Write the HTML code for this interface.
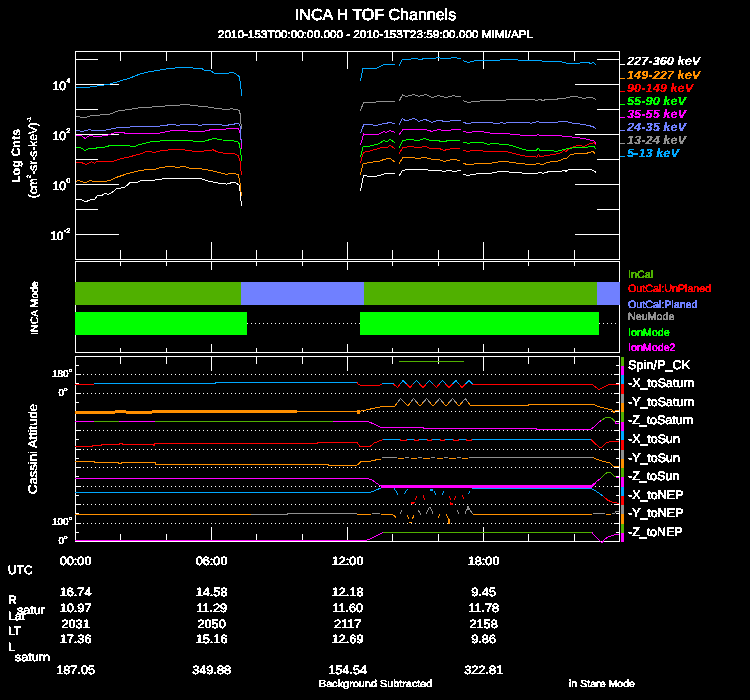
<!DOCTYPE html>
<html><head><meta charset="utf-8"><title>INCA H TOF Channels</title>
<style>
html,body{margin:0;padding:0;background:#000;}
body{width:750px;height:700px;overflow:hidden;}
svg{display:block;will-change:transform;font-family:"Liberation Sans",Arial,Helvetica,sans-serif;}
svg rect,svg polyline,svg line{shape-rendering:crispEdges;}
svg text{text-rendering:geometricPrecision;}
</style></head><body>
<svg width="750" height="700" viewBox="0 0 750 700">
<rect x="0" y="0" width="750" height="700" fill="#000"/>
<defs><filter id="crisp" x="0" y="0" width="750" height="700" filterUnits="userSpaceOnUse" color-interpolation-filters="sRGB"><feComponentTransfer><feFuncA type="discrete" tableValues="0 1 1"/></feComponentTransfer></filter></defs>
<g fill="#fff">
<rect x="75" y="51" width="545" height="1" fill="#fff"/>
<rect x="75" y="259" width="545" height="1" fill="#fff"/>
<rect x="75" y="51" width="1" height="209" fill="#fff"/>
<rect x="619" y="51" width="1" height="209" fill="#fff"/>
<rect x="120" y="51" width="1" height="10" fill="#fff"/>
<rect x="120" y="250" width="1" height="10" fill="#fff"/>
<rect x="166" y="51" width="1" height="10" fill="#fff"/>
<rect x="166" y="250" width="1" height="10" fill="#fff"/>
<rect x="211" y="51" width="1" height="18" fill="#fff"/>
<rect x="211" y="242" width="1" height="18" fill="#fff"/>
<rect x="256" y="51" width="1" height="10" fill="#fff"/>
<rect x="256" y="250" width="1" height="10" fill="#fff"/>
<rect x="302" y="51" width="1" height="10" fill="#fff"/>
<rect x="302" y="250" width="1" height="10" fill="#fff"/>
<rect x="347" y="51" width="1" height="18" fill="#fff"/>
<rect x="347" y="242" width="1" height="18" fill="#fff"/>
<rect x="392" y="51" width="1" height="10" fill="#fff"/>
<rect x="392" y="250" width="1" height="10" fill="#fff"/>
<rect x="438" y="51" width="1" height="10" fill="#fff"/>
<rect x="438" y="250" width="1" height="10" fill="#fff"/>
<rect x="483" y="51" width="1" height="18" fill="#fff"/>
<rect x="483" y="242" width="1" height="18" fill="#fff"/>
<rect x="528" y="51" width="1" height="10" fill="#fff"/>
<rect x="528" y="250" width="1" height="10" fill="#fff"/>
<rect x="574" y="51" width="1" height="10" fill="#fff"/>
<rect x="574" y="250" width="1" height="10" fill="#fff"/>
<rect x="75" y="84" width="44" height="1" fill="#fff"/>
<rect x="575" y="84" width="45" height="1" fill="#fff"/>
<rect x="75" y="134" width="44" height="1" fill="#fff"/>
<rect x="575" y="134" width="45" height="1" fill="#fff"/>
<rect x="75" y="184" width="44" height="1" fill="#fff"/>
<rect x="575" y="184" width="45" height="1" fill="#fff"/>
<rect x="75" y="234" width="44" height="1" fill="#fff"/>
<rect x="575" y="234" width="45" height="1" fill="#fff"/>
<rect x="75" y="59" width="23" height="1" fill="#fff"/>
<rect x="597" y="59" width="23" height="1" fill="#fff"/>
<rect x="75" y="109" width="23" height="1" fill="#fff"/>
<rect x="597" y="109" width="23" height="1" fill="#fff"/>
<rect x="75" y="159" width="23" height="1" fill="#fff"/>
<rect x="597" y="159" width="23" height="1" fill="#fff"/>
<rect x="75" y="209" width="23" height="1" fill="#fff"/>
<rect x="597" y="209" width="23" height="1" fill="#fff"/>
<g id="p1lines">
<polyline points="76.0,199.6 80.7,199.6 86.0,201.6 91.3,199.6 94.7,199.6 97.3,195.6 102.0,195.3 105.0,193.3 108.0,194.4 110.7,193.3 116.7,188.7 124.7,187.3 130.0,182.7 138.0,182.0 140.7,180.4 155.3,180.0 166.0,178.4 190.0,178.4 195.0,178.4 201.9,178.9 208.7,181.2 217.9,183.0 227.0,184.1 232.7,182.3 236.1,183.0 239.6,185.3 240.7,199.0 241.9,205.9" fill="none" stroke="#ffffff" stroke-width="1"/>
<polyline points="360.4,190.6 363.6,175.6 370.0,176.4 376.0,176.4 384.0,174.0 389.0,173.0 395.0,173.6" fill="none" stroke="#ffffff" stroke-width="1"/>
<polyline points="399.0,176.4 402.4,170.4 410.0,169.4 419.0,170.0 425.0,169.4 432.0,171.0 438.0,170.4 444.0,171.4 450.0,170.4 454.0,171.4 461.0,170.4" fill="none" stroke="#ffffff" stroke-width="1"/>
<polyline points="463.0,174.4 468.0,175.4 478.0,173.6 480.0,173.6 492.0,173.0 500.0,171.4 508.0,171.4 510.0,172.4 520.0,172.4 524.0,173.4 536.0,173.4 540.0,172.4 543.0,173.4 546.0,172.4 550.0,171.4 560.0,171.4 565.0,170.4 566.0,171.4 569.0,169.4 590.0,169.4 593.0,170.4 596.0,172.4" fill="none" stroke="#ffffff" stroke-width="1"/>
<polyline points="76.0,181.3 78.0,180.4 85.7,183.0 90.0,180.4 94.0,181.6 103.3,181.6 110.0,180.4 116.7,177.3 127.3,173.7 136.7,171.3 146.0,169.7 155.3,169.3 160.0,167.6 170.0,166.3 178.0,167.4 184.0,166.4 190.0,168.4 195.0,168.1 204.1,169.3 213.3,171.1 222.4,173.4 227.0,174.5 229.3,173.4 235.0,173.4 238.4,175.0 240.0,183.0 241.4,195.6" fill="none" stroke="#ff9000" stroke-width="1"/>
<polyline points="360.4,174.6 363.0,164.0 370.0,162.4 380.0,161.0 384.0,159.4 390.0,158.4 395.0,162.0" fill="none" stroke="#ff9000" stroke-width="1"/>
<polyline points="399.0,163.6 403.0,157.6 412.0,157.4 418.0,158.6 425.0,157.4 432.0,159.4 438.0,159.4 444.0,161.4 452.0,159.4 460.0,160.4" fill="none" stroke="#ff9000" stroke-width="1"/>
<polyline points="463.0,163.0 468.0,165.0 476.0,163.6 480.0,163.6 492.0,163.0 500.0,161.6 506.0,161.6 516.0,163.0 528.0,164.4 535.0,165.0 537.0,163.0 540.0,164.0 543.0,164.6 546.0,163.0 550.0,162.0 556.0,161.6 560.0,160.4 564.0,158.4 567.0,158.0 570.0,155.0 574.0,154.0 580.0,153.0 584.0,154.0 589.0,152.6 593.0,151.6 595.6,154.4" fill="none" stroke="#ff9000" stroke-width="1"/>
<polyline points="76.0,162.3 80.7,162.3 86.0,164.4 91.3,161.7 94.7,163.3 96.7,161.7 112.7,161.3 120.0,159.0 130.0,156.7 140.0,154.0 147.3,151.3 154.0,152.4 160.0,151.0 166.0,150.7 170.0,149.0 180.0,149.6 190.0,150.4 195.0,151.7 204.1,151.0 213.3,149.9 217.9,152.1 224.7,153.3 233.9,153.7 238.4,155.6 240.3,162.4 241.4,175.0" fill="none" stroke="#ff0000" stroke-width="1"/>
<polyline points="360.4,162.6 363.6,152.4 370.0,151.0 378.0,148.6 384.0,147.0 387.0,148.0 390.0,145.4 395.0,148.6" fill="none" stroke="#ff0000" stroke-width="1"/>
<polyline points="399.0,153.4 403.0,147.4 412.0,146.4 418.0,148.0 425.0,146.4 432.0,149.0 438.0,148.0 444.0,150.4 452.0,148.4 460.0,149.0" fill="none" stroke="#ff0000" stroke-width="1"/>
<polyline points="463.0,150.4 468.0,151.4 474.0,150.4 480.0,150.6 488.0,151.6 506.0,151.6 512.0,153.0 520.0,155.0 528.0,156.6 535.0,156.4 537.0,157.4 538.4,154.4 540.0,156.6 550.0,155.0 556.0,154.0 560.0,153.0 564.0,150.6 566.0,151.4 570.0,148.0 574.0,146.6 579.0,145.0 584.0,146.6 589.0,144.0 592.0,143.6 594.0,142.4 595.6,145.0" fill="none" stroke="#ff0000" stroke-width="1"/>
<polyline points="76.0,148.0 80.0,147.4 85.0,150.4 90.0,148.0 94.0,149.0 98.0,147.4 101.0,148.0 110.0,145.6 118.0,145.6 130.0,146.0 134.0,146.6 140.0,144.4 150.0,142.0 160.0,141.0 170.0,140.0 180.0,140.4 190.0,140.4 195.0,141.4 204.1,141.2 214.4,138.4 222.4,140.0 231.6,140.7 237.3,141.4 239.6,144.1 240.7,153.3 241.9,161.3" fill="none" stroke="#00ff00" stroke-width="1"/>
<polyline points="360.4,157.4 363.0,147.0 370.0,146.0 378.0,144.0 384.0,140.6 387.0,141.6 390.0,139.4 395.0,142.6" fill="none" stroke="#00ff00" stroke-width="1"/>
<polyline points="399.0,147.4 403.0,140.6 410.0,139.4 418.0,140.6 425.0,138.4 430.0,140.6 436.0,140.0 443.0,142.0 450.0,140.0 460.0,140.0" fill="none" stroke="#00ff00" stroke-width="1"/>
<polyline points="463.0,142.0 468.0,143.4 476.0,142.0 480.0,142.4 484.0,143.0 488.0,144.4 492.0,143.6 506.0,144.4 512.0,145.6 520.0,148.4 528.0,150.4 536.0,150.4 538.4,148.4 540.0,150.4 550.0,150.4 556.0,151.4 560.0,150.4 566.0,149.0 572.0,148.0 580.0,147.6 584.0,148.0 590.0,146.6 594.0,146.0 595.6,149.0" fill="none" stroke="#00ff00" stroke-width="1"/>
<polyline points="76.0,136.0 81.0,135.4 85.0,138.4 90.0,135.4 96.0,136.6 106.0,135.6 116.0,132.4 130.0,133.4 150.0,133.4 160.0,133.0 170.0,131.0 184.0,130.4 190.0,131.4 195.0,131.1 204.1,131.1 211.0,129.7 222.4,129.3 231.6,128.6 238.4,128.1 240.0,132.7 241.2,141.9 241.9,148.7" fill="none" stroke="#ff00ff" stroke-width="1"/>
<polyline points="360.4,145.4 363.6,134.0 370.0,134.4 378.0,134.4 384.0,131.6 386.0,132.6 390.0,130.4 395.0,132.6" fill="none" stroke="#ff00ff" stroke-width="1"/>
<polyline points="399.0,135.0 403.0,129.4 410.0,129.6 419.0,130.0 425.0,129.6 432.0,131.4 438.0,129.6 446.0,130.6 454.0,129.6 461.0,129.6" fill="none" stroke="#ff00ff" stroke-width="1"/>
<polyline points="463.0,131.4 468.0,132.4 478.0,131.4 480.0,131.4 492.0,133.4 504.0,133.4 514.0,134.4 524.0,135.4 536.0,135.6 538.0,134.6 540.0,135.4 560.0,135.6 566.0,136.6 572.0,137.0 580.0,138.0 588.0,139.4 594.0,141.0 596.0,143.6" fill="none" stroke="#ff00ff" stroke-width="1"/>
<polyline points="76.0,130.4 82.0,131.4 90.0,129.6 94.0,131.0 106.0,130.0 116.0,128.0 130.0,127.0 150.0,126.0 160.0,126.0 172.0,124.4 178.0,125.4 184.0,124.4 195.0,124.3 199.6,125.4 206.4,124.3 217.9,124.3 224.7,125.4 231.6,124.7 238.4,123.1 240.0,125.9 240.7,135.0 241.4,143.0" fill="none" stroke="#7080ff" stroke-width="1"/>
<polyline points="360.4,133.4 364.0,124.0 370.0,124.6 376.0,125.4 384.0,123.6 390.0,122.6 395.0,123.6" fill="none" stroke="#7080ff" stroke-width="1"/>
<polyline points="399.0,125.4 402.4,118.6 406.0,121.0 414.0,118.4 419.0,121.4 425.0,119.4 432.0,122.4 439.0,120.0 446.0,122.0 454.0,120.0 461.0,120.6" fill="none" stroke="#7080ff" stroke-width="1"/>
<polyline points="463.0,122.4 468.0,123.6 474.0,122.4 490.0,122.4 492.0,122.6 495.0,123.6 498.0,123.6 502.0,122.4 504.0,123.4 508.0,122.4 528.0,122.4 531.0,123.4 538.0,121.4 540.0,122.4 556.0,122.4 560.0,121.4 566.0,121.6 574.0,123.4 580.0,124.0 588.0,125.4 593.0,126.6 596.0,128.6" fill="none" stroke="#7080ff" stroke-width="1"/>
<polyline points="76.0,116.6 85.0,117.6 90.0,116.0 100.0,115.0 110.0,114.0 118.0,111.0 130.0,109.4 140.0,107.6 150.0,107.2 160.0,106.4 170.0,105.6 180.0,105.0 185.0,104.0 190.0,105.0 195.0,105.7 208.7,107.1 217.9,108.7 227.0,109.4 231.6,108.7 239.6,110.3 240.7,119.0 241.4,129.3" fill="none" stroke="#909090" stroke-width="1"/>
<polyline points="360.4,110.6 363.6,102.6 370.0,102.4 382.0,101.6 395.0,101.4" fill="none" stroke="#909090" stroke-width="1"/>
<polyline points="399.0,101.4 402.4,95.0 406.0,96.4 414.0,94.6 419.0,96.4 426.0,94.4 432.0,97.6 438.0,95.6 446.0,97.6 454.0,95.6 458.0,97.0 461.0,96.4" fill="none" stroke="#909090" stroke-width="1"/>
<polyline points="463.0,100.6 468.0,102.4 480.0,101.0 500.0,100.6 504.0,100.4 510.0,99.4 534.0,99.4 536.0,100.4 540.0,99.4 543.0,100.6 546.0,99.4 556.0,99.4 560.0,98.4 566.0,98.0 572.0,96.4 576.0,96.4 580.0,97.6 584.0,98.4 588.0,97.4 592.0,97.4 596.0,99.4" fill="none" stroke="#909090" stroke-width="1"/>
<polyline points="76.0,87.4 82.0,87.0 90.0,87.0 100.0,85.6 110.0,84.0 120.0,81.0 130.0,78.0 140.0,74.0 150.0,71.6 160.0,70.0 170.0,68.4 180.0,67.6 190.0,67.6 195.0,68.3 201.9,68.7 205.3,70.5 211.0,71.0 214.4,73.3 227.0,74.0 231.6,72.1 236.0,74.0 239.6,76.7 240.7,87.0 241.9,95.7" fill="none" stroke="#00a8ff" stroke-width="1"/>
<polyline points="360.4,80.6 363.0,68.0 367.0,68.6 376.0,68.6 384.0,64.4 395.0,64.4" fill="none" stroke="#00a8ff" stroke-width="1"/>
<polyline points="399.0,66.0 402.4,59.4 408.0,60.0 414.0,58.0 419.0,59.4 426.0,58.6 432.0,59.0 438.0,57.4 444.0,59.0 454.0,57.6 461.0,58.6" fill="none" stroke="#00a8ff" stroke-width="1"/>
<polyline points="463.0,60.6 468.0,62.4 474.0,61.0 484.0,60.4 498.0,60.4 502.0,59.4 516.0,59.4 520.0,60.4 540.0,60.6 546.0,61.6 560.0,61.6 568.0,63.4 578.0,63.4 582.0,62.6 588.0,62.6 591.0,63.4 593.0,62.6 596.0,64.4" fill="none" stroke="#00a8ff" stroke-width="1"/>
</g>
<rect x="620" y="64" width="5" height="1" fill="#ffffff"/>
<rect x="620" y="78" width="5" height="1" fill="#ff9000"/>
<rect x="620" y="91" width="5" height="1" fill="#ff0000"/>
<rect x="620" y="104" width="5" height="1" fill="#00ff00"/>
<rect x="620" y="117" width="5" height="1" fill="#ff00ff"/>
<rect x="620" y="130" width="5" height="1" fill="#7080ff"/>
<rect x="620" y="143" width="5" height="1" fill="#909090"/>
<rect x="620" y="156" width="5" height="1" fill="#00a8ff"/>
<rect x="75" y="261" width="545" height="1" fill="#fff"/>
<rect x="75" y="352" width="545" height="1" fill="#fff"/>
<rect x="75" y="261" width="1" height="92" fill="#fff"/>
<rect x="619" y="261" width="1" height="92" fill="#fff"/>
<rect x="120" y="261" width="1" height="5" fill="#fff"/>
<rect x="120" y="348" width="1" height="5" fill="#fff"/>
<rect x="166" y="261" width="1" height="5" fill="#fff"/>
<rect x="166" y="348" width="1" height="5" fill="#fff"/>
<rect x="211" y="261" width="1" height="9" fill="#fff"/>
<rect x="211" y="344" width="1" height="9" fill="#fff"/>
<rect x="256" y="261" width="1" height="5" fill="#fff"/>
<rect x="256" y="348" width="1" height="5" fill="#fff"/>
<rect x="302" y="261" width="1" height="5" fill="#fff"/>
<rect x="302" y="348" width="1" height="5" fill="#fff"/>
<rect x="347" y="261" width="1" height="9" fill="#fff"/>
<rect x="347" y="344" width="1" height="9" fill="#fff"/>
<rect x="392" y="261" width="1" height="5" fill="#fff"/>
<rect x="392" y="348" width="1" height="5" fill="#fff"/>
<rect x="438" y="261" width="1" height="5" fill="#fff"/>
<rect x="438" y="348" width="1" height="5" fill="#fff"/>
<rect x="483" y="261" width="1" height="9" fill="#fff"/>
<rect x="483" y="344" width="1" height="9" fill="#fff"/>
<rect x="528" y="261" width="1" height="5" fill="#fff"/>
<rect x="528" y="348" width="1" height="5" fill="#fff"/>
<rect x="574" y="261" width="1" height="5" fill="#fff"/>
<rect x="574" y="348" width="1" height="5" fill="#fff"/>
<rect x="75" y="282" width="166" height="23" fill="#50b000"/>
<rect x="241" y="282" width="123" height="23" fill="#7080ff"/>
<rect x="364" y="282" width="233" height="23" fill="#50b000"/>
<rect x="597" y="282" width="23" height="23" fill="#7080ff"/>
<rect x="75" y="312" width="172" height="23" fill="#00ff00"/>
<rect x="360" y="312" width="239" height="23" fill="#00ff00"/>
<line x1="247" y1="323.5" x2="360" y2="323.5" stroke="#fff" stroke-width="1" stroke-dasharray="1 3"/>
<line x1="599" y1="323.5" x2="619" y2="323.5" stroke="#fff" stroke-width="1" stroke-dasharray="1 3"/>
<rect x="75" y="356" width="545" height="1" fill="#fff"/>
<rect x="75" y="541" width="545" height="1" fill="#fff"/>
<rect x="75" y="356" width="1" height="186" fill="#fff"/>
<rect x="619" y="356" width="1" height="186" fill="#fff"/>
<rect x="120" y="356" width="1" height="8" fill="#fff"/>
<rect x="120" y="534" width="1" height="8" fill="#fff"/>
<rect x="166" y="356" width="1" height="8" fill="#fff"/>
<rect x="166" y="534" width="1" height="8" fill="#fff"/>
<rect x="211" y="356" width="1" height="15" fill="#fff"/>
<rect x="211" y="527" width="1" height="15" fill="#fff"/>
<rect x="256" y="356" width="1" height="8" fill="#fff"/>
<rect x="256" y="534" width="1" height="8" fill="#fff"/>
<rect x="302" y="356" width="1" height="8" fill="#fff"/>
<rect x="302" y="534" width="1" height="8" fill="#fff"/>
<rect x="347" y="356" width="1" height="15" fill="#fff"/>
<rect x="347" y="527" width="1" height="15" fill="#fff"/>
<rect x="392" y="356" width="1" height="8" fill="#fff"/>
<rect x="392" y="534" width="1" height="8" fill="#fff"/>
<rect x="438" y="356" width="1" height="8" fill="#fff"/>
<rect x="438" y="534" width="1" height="8" fill="#fff"/>
<rect x="483" y="356" width="1" height="15" fill="#fff"/>
<rect x="483" y="527" width="1" height="15" fill="#fff"/>
<rect x="528" y="356" width="1" height="8" fill="#fff"/>
<rect x="528" y="534" width="1" height="8" fill="#fff"/>
<rect x="574" y="356" width="1" height="8" fill="#fff"/>
<rect x="574" y="534" width="1" height="8" fill="#fff"/>
<rect x="75" y="365" width="4" height="1" fill="#fff"/>
<rect x="616" y="365" width="4" height="1" fill="#fff"/>
<rect x="75" y="374" width="6" height="1" fill="#fff"/>
<rect x="614" y="374" width="6" height="1" fill="#fff"/>
<rect x="75" y="383" width="4" height="1" fill="#fff"/>
<rect x="616" y="383" width="4" height="1" fill="#fff"/>
<rect x="75" y="393" width="6" height="1" fill="#fff"/>
<rect x="614" y="393" width="6" height="1" fill="#fff"/>
<rect x="75" y="402" width="4" height="1" fill="#fff"/>
<rect x="616" y="402" width="4" height="1" fill="#fff"/>
<rect x="75" y="411" width="6" height="1" fill="#fff"/>
<rect x="614" y="411" width="6" height="1" fill="#fff"/>
<rect x="75" y="421" width="4" height="1" fill="#fff"/>
<rect x="616" y="421" width="4" height="1" fill="#fff"/>
<rect x="75" y="430" width="6" height="1" fill="#fff"/>
<rect x="614" y="430" width="6" height="1" fill="#fff"/>
<rect x="75" y="439" width="4" height="1" fill="#fff"/>
<rect x="616" y="439" width="4" height="1" fill="#fff"/>
<rect x="75" y="449" width="6" height="1" fill="#fff"/>
<rect x="614" y="449" width="6" height="1" fill="#fff"/>
<rect x="75" y="458" width="4" height="1" fill="#fff"/>
<rect x="616" y="458" width="4" height="1" fill="#fff"/>
<rect x="75" y="467" width="6" height="1" fill="#fff"/>
<rect x="614" y="467" width="6" height="1" fill="#fff"/>
<rect x="75" y="476" width="4" height="1" fill="#fff"/>
<rect x="616" y="476" width="4" height="1" fill="#fff"/>
<rect x="75" y="486" width="6" height="1" fill="#fff"/>
<rect x="614" y="486" width="6" height="1" fill="#fff"/>
<rect x="75" y="495" width="4" height="1" fill="#fff"/>
<rect x="616" y="495" width="4" height="1" fill="#fff"/>
<rect x="75" y="504" width="6" height="1" fill="#fff"/>
<rect x="614" y="504" width="6" height="1" fill="#fff"/>
<rect x="75" y="513" width="4" height="1" fill="#fff"/>
<rect x="616" y="513" width="4" height="1" fill="#fff"/>
<rect x="75" y="523" width="6" height="1" fill="#fff"/>
<rect x="614" y="523" width="6" height="1" fill="#fff"/>
<rect x="75" y="532" width="4" height="1" fill="#fff"/>
<rect x="616" y="532" width="4" height="1" fill="#fff"/>
<line x1="79" y1="374.5" x2="619" y2="374.5" stroke="#fff" stroke-width="1" stroke-dasharray="1 3"/>
<line x1="79" y1="393.5" x2="619" y2="393.5" stroke="#fff" stroke-width="1" stroke-dasharray="1 3"/>
<line x1="79" y1="411.5" x2="619" y2="411.5" stroke="#fff" stroke-width="1" stroke-dasharray="1 3"/>
<line x1="79" y1="430.5" x2="619" y2="430.5" stroke="#fff" stroke-width="1" stroke-dasharray="1 3"/>
<line x1="79" y1="449.5" x2="619" y2="449.5" stroke="#fff" stroke-width="1" stroke-dasharray="1 3"/>
<line x1="79" y1="467.5" x2="619" y2="467.5" stroke="#fff" stroke-width="1" stroke-dasharray="1 3"/>
<line x1="79" y1="486.5" x2="619" y2="486.5" stroke="#fff" stroke-width="1" stroke-dasharray="1 3"/>
<line x1="79" y1="504.5" x2="619" y2="504.5" stroke="#fff" stroke-width="1" stroke-dasharray="1 3"/>
<line x1="79" y1="523.5" x2="619" y2="523.5" stroke="#fff" stroke-width="1" stroke-dasharray="1 3"/>
<rect x="621" y="357" width="3" height="9" fill="#50b000"/>
<rect x="621" y="366" width="3" height="9" fill="#ff00ff"/>
<rect x="621" y="375" width="3" height="9" fill="#00a8ff"/>
<rect x="621" y="384" width="3" height="10" fill="#ff0000"/>
<rect x="621" y="394" width="3" height="9" fill="#909090"/>
<rect x="621" y="403" width="3" height="9" fill="#ff9000"/>
<rect x="621" y="412" width="3" height="10" fill="#50b000"/>
<rect x="621" y="422" width="3" height="9" fill="#ff00ff"/>
<rect x="621" y="431" width="3" height="9" fill="#00a8ff"/>
<rect x="621" y="440" width="3" height="10" fill="#ff0000"/>
<rect x="621" y="450" width="3" height="9" fill="#909090"/>
<rect x="621" y="459" width="3" height="9" fill="#ff9000"/>
<rect x="621" y="468" width="3" height="9" fill="#50b000"/>
<rect x="621" y="477" width="3" height="10" fill="#ff00ff"/>
<rect x="621" y="487" width="3" height="9" fill="#00a8ff"/>
<rect x="621" y="496" width="3" height="9" fill="#ff0000"/>
<rect x="621" y="505" width="3" height="9" fill="#909090"/>
<rect x="621" y="514" width="3" height="10" fill="#ff9000"/>
<rect x="621" y="524" width="3" height="9" fill="#50b000"/>
<rect x="621" y="533" width="3" height="9" fill="#ff00ff"/>
<g id="p3lines">
<polyline points="399.0,361.5 464.0,361.5" fill="none" stroke="#50b000" stroke-width="1"/>
<polyline points="75.0,384.5 94.0,384.5" fill="none" stroke="#ff0000" stroke-width="1"/>
<polyline points="94.0,383.5 215.0,383.5 215.0,382.5 357.0,382.5" fill="none" stroke="#00a8ff" stroke-width="1"/>
<polyline points="357.0,382.5 358.0,384.0 361.0,385.5 379.0,385.5 382.0,384.2" fill="none" stroke="#ff0000" stroke-width="1"/>
<polyline points="382.0,384.0 383.0,383.5 393.0,383.5" fill="none" stroke="#00a8ff" stroke-width="1"/>
<polyline points="393.0,383.5 393.6,384.0" fill="none" stroke="#00a8ff" stroke-width="1"/>
<polyline points="393.6,384.0 397.4,387.5" fill="none" stroke="#ff0000" stroke-width="1"/>
<polyline points="397.4,387.5 400.2,384.0" fill="none" stroke="#ff0000" stroke-width="1"/>
<polyline points="400.2,384.0 403.0,380.5" fill="none" stroke="#00a8ff" stroke-width="1"/>
<polyline points="403.0,380.5 406.5,384.0" fill="none" stroke="#00a8ff" stroke-width="1"/>
<polyline points="406.5,384.0 410.0,387.5" fill="none" stroke="#ff0000" stroke-width="1"/>
<polyline points="410.0,387.5 413.2,384.0" fill="none" stroke="#ff0000" stroke-width="1"/>
<polyline points="413.2,384.0 416.4,380.5" fill="none" stroke="#00a8ff" stroke-width="1"/>
<polyline points="416.4,380.5 419.7,384.0" fill="none" stroke="#00a8ff" stroke-width="1"/>
<polyline points="419.7,384.0 423.0,387.5" fill="none" stroke="#ff0000" stroke-width="1"/>
<polyline points="423.0,387.5 426.3,384.0" fill="none" stroke="#ff0000" stroke-width="1"/>
<polyline points="426.3,384.0 429.6,380.5" fill="none" stroke="#00a8ff" stroke-width="1"/>
<polyline points="429.6,380.5 433.0,384.0" fill="none" stroke="#00a8ff" stroke-width="1"/>
<polyline points="433.0,384.0 436.4,387.5" fill="none" stroke="#ff0000" stroke-width="1"/>
<polyline points="436.4,387.5 439.4,384.0" fill="none" stroke="#ff0000" stroke-width="1"/>
<polyline points="439.4,384.0 442.4,380.5" fill="none" stroke="#00a8ff" stroke-width="1"/>
<polyline points="442.4,380.5 445.7,384.0" fill="none" stroke="#00a8ff" stroke-width="1"/>
<polyline points="445.7,384.0 449.0,387.5" fill="none" stroke="#ff0000" stroke-width="1"/>
<polyline points="449.0,387.5 452.5,384.0" fill="none" stroke="#ff0000" stroke-width="1"/>
<polyline points="452.5,384.0 456.0,380.5" fill="none" stroke="#00a8ff" stroke-width="1"/>
<polyline points="456.0,380.5 459.0,384.0" fill="none" stroke="#00a8ff" stroke-width="1"/>
<polyline points="459.0,384.0 462.0,387.5" fill="none" stroke="#ff0000" stroke-width="1"/>
<polyline points="462.0,387.5 465.5,384.0" fill="none" stroke="#ff0000" stroke-width="1"/>
<polyline points="465.5,384.0 469.0,380.5" fill="none" stroke="#00a8ff" stroke-width="1"/>
<polyline points="469.0,380.5 472.5,384.0" fill="none" stroke="#00a8ff" stroke-width="1"/>
<polyline points="472.5,384.0 473.0,384.5" fill="none" stroke="#ff0000" stroke-width="1"/>
<polyline points="473.0,384.5 592.0,384.5 599.0,389.5 609.0,384.5 619.0,384.5" fill="none" stroke="#ff0000" stroke-width="1"/>
<rect x="75" y="411" width="40" height="3" fill="#ff9000"/>
<rect x="115" y="410" width="11" height="3" fill="#ff9000"/>
<rect x="126" y="411" width="26" height="3" fill="#ff9000"/>
<rect x="152" y="410" width="145" height="3" fill="#ff9000"/>
<polyline points="297.0,411.5 357.0,411.5" fill="none" stroke="#ff9000" stroke-width="1"/>
<rect x="357" y="410" width="3" height="4" fill="#ff9000"/>
<polyline points="359.0,411.5 382.0,406.5 394.4,406.5" fill="none" stroke="#ff9000" stroke-width="1"/>
<polyline points="394.4,406.5 397.4,402.5" fill="none" stroke="#ff9000" stroke-width="1"/>
<polyline points="397.4,402.5 400.4,398.5" fill="none" stroke="#909090" stroke-width="1"/>
<polyline points="400.4,398.5 404.5,402.5" fill="none" stroke="#909090" stroke-width="1"/>
<polyline points="404.5,402.5 408.0,406.0" fill="none" stroke="#ff9000" stroke-width="1"/>
<polyline points="408.0,406.0 410.6,402.5" fill="none" stroke="#ff9000" stroke-width="1"/>
<polyline points="410.6,402.5 413.6,398.5" fill="none" stroke="#909090" stroke-width="1"/>
<polyline points="413.6,398.5 417.0,402.5" fill="none" stroke="#909090" stroke-width="1"/>
<polyline points="417.0,402.5 420.0,406.0" fill="none" stroke="#ff9000" stroke-width="1"/>
<polyline points="420.0,406.0 423.1,402.5" fill="none" stroke="#ff9000" stroke-width="1"/>
<polyline points="423.1,402.5 426.6,398.5" fill="none" stroke="#909090" stroke-width="1"/>
<polyline points="426.6,398.5 430.0,402.5" fill="none" stroke="#909090" stroke-width="1"/>
<polyline points="430.0,402.5 433.0,406.0" fill="none" stroke="#ff9000" stroke-width="1"/>
<polyline points="433.0,406.0 436.1,402.5" fill="none" stroke="#ff9000" stroke-width="1"/>
<polyline points="436.1,402.5 439.6,398.5" fill="none" stroke="#909090" stroke-width="1"/>
<polyline points="439.6,398.5 443.0,402.5" fill="none" stroke="#909090" stroke-width="1"/>
<polyline points="443.0,402.5 446.0,406.0" fill="none" stroke="#ff9000" stroke-width="1"/>
<polyline points="446.0,406.0 449.1,402.5" fill="none" stroke="#ff9000" stroke-width="1"/>
<polyline points="449.1,402.5 452.6,398.5" fill="none" stroke="#909090" stroke-width="1"/>
<polyline points="452.6,398.5 456.0,402.5" fill="none" stroke="#909090" stroke-width="1"/>
<polyline points="456.0,402.5 459.0,406.0" fill="none" stroke="#ff9000" stroke-width="1"/>
<polyline points="459.0,406.0 462.0,402.5" fill="none" stroke="#ff9000" stroke-width="1"/>
<polyline points="462.0,402.5 465.4,398.5" fill="none" stroke="#909090" stroke-width="1"/>
<polyline points="465.4,398.5 468.2,402.5" fill="none" stroke="#909090" stroke-width="1"/>
<polyline points="468.2,402.5 470.0,405.0" fill="none" stroke="#ff9000" stroke-width="1"/>
<polyline points="470.0,405.5 528.0,405.5 528.0,404.5 594.0,404.5 598.0,406.6 606.0,408.6 612.0,410.0 614.0,413.0 615.0,411.0 619.0,410.5" fill="none" stroke="#ff9000" stroke-width="1"/>
<polyline points="75.0,421.5 94.0,421.5" fill="none" stroke="#ff00ff" stroke-width="1"/>
<polyline points="94.0,421.5 119.0,421.5" fill="none" stroke="#50b000" stroke-width="1"/>
<polyline points="119.0,421.5 155.0,421.5" fill="none" stroke="#ff00ff" stroke-width="1"/>
<polyline points="155.0,421.5 333.0,421.5" fill="none" stroke="#50b000" stroke-width="1"/>
<polyline points="333.0,421.5 368.0,421.5 374.0,424.0 381.0,427.5 423.0,427.5 424.0,428.5 536.0,428.5 537.0,429.5 590.0,429.5 594.0,427.0 598.0,423.0 601.0,420.5" fill="none" stroke="#ff00ff" stroke-width="1"/>
<polyline points="601.0,420.5 605.0,418.0 610.0,417.4 613.0,419.4 615.0,421.4" fill="none" stroke="#50b000" stroke-width="1"/>
<polyline points="615.0,421.4 616.0,423.5 619.0,423.5" fill="none" stroke="#ff00ff" stroke-width="1"/>
<polyline points="75.0,446.5 92.0,446.5 92.0,445.5 101.0,445.5 101.0,444.5 119.0,444.5 119.0,443.5 122.0,443.5 122.0,444.5 153.0,444.5 154.0,445.5 155.0,443.5 317.0,443.5 317.0,442.5 357.0,442.5 359.0,445.0 360.0,446.5 370.0,446.5 374.0,443.0 383.0,439.6" fill="none" stroke="#ff0000" stroke-width="1"/>
<polyline points="383.0,439.5 400.0,439.5" fill="none" stroke="#00a8ff" stroke-width="1"/>
<polyline points="400.0,439.5 401.0,440.5 406.0,440.5 407.0,439.5" fill="none" stroke="#ff0000" stroke-width="1"/>
<polyline points="407.0,439.5 414.0,439.5" fill="none" stroke="#00a8ff" stroke-width="1"/>
<polyline points="414.0,439.5 415.0,440.5 418.0,440.5 419.0,439.5" fill="none" stroke="#ff0000" stroke-width="1"/>
<polyline points="419.0,439.5 427.0,439.5" fill="none" stroke="#00a8ff" stroke-width="1"/>
<polyline points="427.0,439.5 428.0,440.5 431.0,440.5 432.0,439.5" fill="none" stroke="#ff0000" stroke-width="1"/>
<polyline points="432.0,439.5 440.0,439.5" fill="none" stroke="#00a8ff" stroke-width="1"/>
<polyline points="440.0,439.5 441.0,440.5 444.0,440.5 445.0,439.5" fill="none" stroke="#ff0000" stroke-width="1"/>
<polyline points="445.0,439.5 453.0,439.5" fill="none" stroke="#00a8ff" stroke-width="1"/>
<polyline points="453.0,439.5 454.0,440.5 458.0,440.5 459.0,439.5" fill="none" stroke="#ff0000" stroke-width="1"/>
<polyline points="459.0,439.5 466.0,439.5" fill="none" stroke="#00a8ff" stroke-width="1"/>
<polyline points="466.0,439.5 467.0,440.5 471.0,440.5 472.0,439.5" fill="none" stroke="#ff0000" stroke-width="1"/>
<polyline points="472.0,439.5 591.0,439.5" fill="none" stroke="#00a8ff" stroke-width="1"/>
<polyline points="591.0,439.5 596.0,444.4 599.0,447.0 601.0,448.0 604.0,445.0 607.0,442.4 612.0,441.4 619.0,441.0" fill="none" stroke="#ff0000" stroke-width="1"/>
<polyline points="75.0,461.5 94.0,461.5 94.0,462.5 118.0,462.5 118.0,463.5 121.0,463.5 121.0,462.5 155.0,462.5 155.0,464.5 328.0,464.5 328.0,465.5 356.0,465.5 358.0,464.5 361.0,461.5 370.0,461.5 372.0,460.5 375.0,460.5 376.0,459.5 381.0,459.5" fill="none" stroke="#ff9000" stroke-width="1"/>
<polyline points="382.0,457.5 397.0,457.5" fill="none" stroke="#909090" stroke-width="1"/>
<polyline points="398.0,458.5 404.0,458.5" fill="none" stroke="#ff9000" stroke-width="1"/>
<polyline points="411.0,458.5 417.0,458.5" fill="none" stroke="#ff9000" stroke-width="1"/>
<polyline points="423.0,458.5 430.0,458.5" fill="none" stroke="#ff9000" stroke-width="1"/>
<polyline points="437.0,458.5 443.0,458.5" fill="none" stroke="#ff9000" stroke-width="1"/>
<polyline points="449.0,458.5 456.0,458.5" fill="none" stroke="#ff9000" stroke-width="1"/>
<polyline points="462.0,458.5 468.0,458.5" fill="none" stroke="#ff9000" stroke-width="1"/>
<polyline points="405.0,457.5 409.0,457.5" fill="none" stroke="#909090" stroke-width="1"/>
<polyline points="418.0,457.5 422.0,457.5" fill="none" stroke="#909090" stroke-width="1"/>
<polyline points="431.0,457.5 435.0,457.5" fill="none" stroke="#909090" stroke-width="1"/>
<polyline points="444.0,457.5 448.0,457.5" fill="none" stroke="#909090" stroke-width="1"/>
<polyline points="457.0,457.5 461.0,457.5" fill="none" stroke="#909090" stroke-width="1"/>
<polyline points="469.0,457.5 593.0,457.5" fill="none" stroke="#909090" stroke-width="1"/>
<polyline points="593.0,457.5 596.0,459.0 602.0,461.0 610.0,463.0 613.0,466.0 619.0,466.5" fill="none" stroke="#ff9000" stroke-width="1"/>
<polyline points="75.0,478.5 368.0,478.5 372.0,480.0 376.0,483.0 381.0,486.0" fill="none" stroke="#ff00ff" stroke-width="1"/>
<polyline points="75.0,492.5 369.0,492.5 374.0,491.0 380.0,488.4 383.0,487.0" fill="none" stroke="#00a8ff" stroke-width="1"/>
<polyline points="472.0,488.5 591.0,488.5 594.0,490.0 599.0,493.0 603.0,496.0" fill="none" stroke="#00a8ff" stroke-width="1"/>
<polyline points="603.0,496.0 608.0,500.4 612.0,502.0 619.0,503.5" fill="none" stroke="#ff0000" stroke-width="1"/>
<polyline points="394.0,488.4 396.0,491.0 398.0,495.0" fill="none" stroke="#00a8ff" stroke-width="1"/>
<polyline points="404.0,494.4 406.0,491.0 408.0,489.0" fill="none" stroke="#00a8ff" stroke-width="1"/>
<polyline points="430.0,489.5 433.0,490.5" fill="none" stroke="#00a8ff" stroke-width="1"/>
<polyline points="434.0,491.0 436.0,494.4" fill="none" stroke="#00a8ff" stroke-width="1"/>
<polyline points="442.0,495.0 444.0,491.0" fill="none" stroke="#00a8ff" stroke-width="1"/>
<polyline points="468.0,494.4 470.0,491.0" fill="none" stroke="#00a8ff" stroke-width="1"/>
<polyline points="415.0,500.0 417.0,496.4" fill="none" stroke="#ff0000" stroke-width="1"/>
<polyline points="423.0,495.6 425.0,500.0" fill="none" stroke="#ff0000" stroke-width="1"/>
<polyline points="411.0,502.0 413.0,504.0 415.0,502.5" fill="none" stroke="#ff0000" stroke-width="1"/>
<polyline points="449.0,496.4 451.0,500.0" fill="none" stroke="#ff0000" stroke-width="1"/>
<polyline points="454.0,500.0 456.0,496.4" fill="none" stroke="#ff0000" stroke-width="1"/>
<polyline points="450.0,502.5 451.5,504.4 453.0,503.0" fill="none" stroke="#ff0000" stroke-width="1"/>
<polyline points="462.0,495.6 464.0,499.0" fill="none" stroke="#ff0000" stroke-width="1"/>
<rect x="430" y="489" width="3" height="2" fill="#00a8ff"/>
<rect x="448" y="519" width="2" height="5" fill="#ff9000"/>
<rect x="411" y="502" width="3" height="2" fill="#ff0000"/>
<rect x="450" y="503" width="3" height="2" fill="#ff0000"/>
<rect x="467" y="506" width="2" height="4" fill="#909090"/>
<rect x="409" y="522" width="3" height="1" fill="#ff9000"/>
<rect x="381" y="485" width="211" height="3" fill="#ff00ff"/>
<polyline points="592.0,486.5 595.0,483.0" fill="none" stroke="#ff00ff" stroke-width="2"/>
<polyline points="595.0,483.0 598.0,480.4 601.0,478.0" fill="none" stroke="#ff00ff" stroke-width="1"/>
<polyline points="601.0,478.0 605.0,474.0 608.0,472.0 611.0,473.0 614.0,476.0 616.0,477.0" fill="none" stroke="#50b000" stroke-width="1"/>
<polyline points="616.0,477.5 619.0,477.5" fill="none" stroke="#ff00ff" stroke-width="1"/>
<polyline points="75.0,514.5 251.0,514.5" fill="none" stroke="#ff9000" stroke-width="1"/>
<polyline points="251.0,514.5 287.0,514.5 287.0,513.5 357.0,513.5" fill="none" stroke="#909090" stroke-width="1"/>
<polyline points="357.0,514.5 371.0,514.5" fill="none" stroke="#ff9000" stroke-width="1"/>
<polyline points="372.0,513.5 380.0,513.5" fill="none" stroke="#909090" stroke-width="1"/>
<polyline points="381.0,514.5 392.0,514.5 394.0,515.5 396.0,517.6" fill="none" stroke="#ff9000" stroke-width="1"/>
<polyline points="400.0,513.6 402.0,510.0" fill="none" stroke="#909090" stroke-width="1"/>
<polyline points="418.0,510.0 421.0,514.4" fill="none" stroke="#909090" stroke-width="1"/>
<polyline points="426.0,513.6 429.0,508.0 430.0,507.0 431.0,509.0 433.0,513.6" fill="none" stroke="#909090" stroke-width="1"/>
<polyline points="457.0,510.0 459.0,513.6" fill="none" stroke="#909090" stroke-width="1"/>
<polyline points="465.0,513.6 467.0,509.0 468.0,506.5 469.5,509.0 472.4,514.0" fill="none" stroke="#909090" stroke-width="1"/>
<polyline points="407.0,515.0 409.0,519.0" fill="none" stroke="#ff9000" stroke-width="1"/>
<polyline points="409.0,522.0 412.0,522.5" fill="none" stroke="#ff9000" stroke-width="1"/>
<polyline points="412.4,519.0 414.0,515.0" fill="none" stroke="#ff9000" stroke-width="1"/>
<polyline points="438.0,517.6 440.0,514.0" fill="none" stroke="#ff9000" stroke-width="1"/>
<polyline points="446.0,514.0 448.0,518.0 448.5,521.0 450.0,523.0" fill="none" stroke="#ff9000" stroke-width="1"/>
<polyline points="473.0,514.5 592.0,514.5" fill="none" stroke="#ff9000" stroke-width="1"/>
<polyline points="593.0,513.5 605.0,513.5" fill="none" stroke="#909090" stroke-width="1"/>
<polyline points="606.0,514.5 611.0,514.5" fill="none" stroke="#ff9000" stroke-width="1"/>
<polyline points="612.0,513.5 615.0,513.0 616.0,511.6 619.0,511.6" fill="none" stroke="#909090" stroke-width="1"/>
<polyline points="75.0,540.5 366.0,540.5 370.0,539.0 376.0,536.0 382.0,533.0 383.0,532.5" fill="none" stroke="#ff00ff" stroke-width="1"/>
<polyline points="383.0,532.5 592.0,532.5" fill="none" stroke="#50b000" stroke-width="1"/>
<polyline points="592.0,532.5 595.0,536.0 599.0,540.0 602.0,543.0 605.0,539.0 608.0,537.0 614.0,535.0 619.0,534.0" fill="none" stroke="#ff00ff" stroke-width="1"/>
</g>
<g filter="url(#crisp)">
<text transform="translate(66 90.1)" font-size="12" text-anchor="end" stroke="#fff" stroke-width="0.3">10</text>
<text transform="translate(66.3 83)" font-size="7" stroke="#fff" stroke-width="0.3">4</text>
<text transform="translate(66 140.1)" font-size="12" text-anchor="end" stroke="#fff" stroke-width="0.3">10</text>
<text transform="translate(66.3 133)" font-size="7" stroke="#fff" stroke-width="0.3">2</text>
<text transform="translate(66 190.1)" font-size="12" text-anchor="end" stroke="#fff" stroke-width="0.3">10</text>
<text transform="translate(66.3 183)" font-size="7" stroke="#fff" stroke-width="0.3">0</text>
<text transform="translate(63.5 240.1)" font-size="12" text-anchor="end" stroke="#fff" stroke-width="0.3">10</text>
<text transform="translate(63.8 233)" font-size="7" stroke="#fff" stroke-width="0.3">-2</text>
<text transform="translate(20 156) rotate(-90) scale(1.04 1)" font-size="12" text-anchor="middle" font-weight="bold">Log Cnts</text>
<text x="37" y="157.5" font-size="12" text-anchor="middle" stroke="#fff" stroke-width="0.15" transform="rotate(-90 37 157.5)">(cm<tspan font-size="6" dy="-6">2</tspan><tspan dy="6">-sr-s-keV)</tspan><tspan font-size="6" dy="-6">-1</tspan></text>
<text transform="translate(627 65.2) scale(1.067 1)" font-size="12" fill="#ffffff" font-weight="bold" font-style="italic">227-360 keV</text>
<text transform="translate(627 79.2) scale(1.067 1)" font-size="12" fill="#ff9000" font-weight="bold" font-style="italic">149-227 keV</text>
<text transform="translate(627 92.2) scale(1.067 1)" font-size="12" fill="#ff0000" font-weight="bold" font-style="italic">90-149 keV</text>
<text transform="translate(627 105.2) scale(1.067 1)" font-size="12" fill="#00ff00" font-weight="bold" font-style="italic">55-90 keV</text>
<text transform="translate(627 118.2) scale(1.067 1)" font-size="12" fill="#ff00ff" font-weight="bold" font-style="italic">35-55 keV</text>
<text transform="translate(627 131.2) scale(1.067 1)" font-size="12" fill="#7080ff" font-weight="bold" font-style="italic">24-35 keV</text>
<text transform="translate(627 144.2) scale(1.067 1)" font-size="12" fill="#909090" font-weight="bold" font-style="italic">13-24 keV</text>
<text transform="translate(627 157.2) scale(1.067 1)" font-size="12" fill="#00a8ff" font-weight="bold" font-style="italic">5-13 keV</text>
<text transform="translate(375.5 20.4)" font-size="16" text-anchor="middle" stroke="#fff" stroke-width="0.3">INCA H TOF Channels</text>
<text transform="translate(375.5 37.6) scale(1.065 1)" font-size="11" text-anchor="middle" stroke="#fff" stroke-width="0.3">2010-153T00:00:00.000 - 2010-153T23:59:00.000 MIMI/APL</text>
<text transform="translate(38 308) rotate(-90)" font-size="10.5" text-anchor="middle" stroke="#fff" stroke-width="0.1">INCA Mode</text>
<text transform="translate(628 277.7)" font-size="10.7" fill="#50b000" stroke="#50b000" stroke-width="0.3">InCal</text>
<text transform="translate(628 292.3)" font-size="10.7" fill="#ff0000" stroke="#ff0000" stroke-width="0.3">OutCal:UnPlaned</text>
<text transform="translate(628 307.8)" font-size="10.7" fill="#7080ff" stroke="#7080ff" stroke-width="0.3">OutCal:Planed</text>
<text transform="translate(628 320.3)" font-size="10.7" fill="#909090" stroke="#909090" stroke-width="0.3">NeuMode</text>
<text transform="translate(628 335.5)" font-size="10.7" fill="#00ff00" stroke="#00ff00" stroke-width="0.3">IonMode</text>
<text transform="translate(628 351)" font-size="10.7" fill="#ff00ff" stroke="#ff00ff" stroke-width="0.3">IonMode2</text>
<text transform="translate(628 368.7) scale(1.025 1)" font-size="12.4" stroke="#fff" stroke-width="0.3">Spin/P_CK</text>
<text transform="translate(628 387.3) scale(1.004 1)" font-size="12.4" stroke="#fff" stroke-width="0.3">-X_toSaturn</text>
<text transform="translate(628 405.8) scale(1.004 1)" font-size="12.4" stroke="#fff" stroke-width="0.3">-Y_toSaturn</text>
<text transform="translate(628 424.4) scale(1.004 1)" font-size="12.4" stroke="#fff" stroke-width="0.3">-Z_toSaturn</text>
<text transform="translate(628 443.0) scale(1.004 1)" font-size="12.4" stroke="#fff" stroke-width="0.3">-X_toSun</text>
<text transform="translate(628 461.5) scale(1.004 1)" font-size="12.4" stroke="#fff" stroke-width="0.3">-Y_toSun</text>
<text transform="translate(628 480.1) scale(1.004 1)" font-size="12.4" stroke="#fff" stroke-width="0.3">-Z_toSun</text>
<text transform="translate(628 498.7) scale(1.004 1)" font-size="12.4" stroke="#fff" stroke-width="0.3">-X_toNEP</text>
<text transform="translate(628 517.3) scale(1.004 1)" font-size="12.4" stroke="#fff" stroke-width="0.3">-Y_toNEP</text>
<text transform="translate(628 535.8) scale(1.004 1)" font-size="12.4" stroke="#fff" stroke-width="0.3">-Z_toNEP</text>
<text transform="translate(37.2 449) rotate(-90) scale(1.045 1)" font-size="12.5" text-anchor="middle" stroke="#fff" stroke-width="0.15">Cassini Attitude</text>
<text transform="translate(68.6 377.3)" font-size="10" text-anchor="end" stroke="#fff" stroke-width="0.3">180</text>
<text transform="translate(68.89999999999999 371.8)" font-size="5.5" stroke="#fff" stroke-width="0.4">o</text>
<text transform="translate(64 396.3)" font-size="10" text-anchor="end" stroke="#fff" stroke-width="0.3">0</text>
<text transform="translate(64.3 390.8)" font-size="5.5" stroke="#fff" stroke-width="0.4">o</text>
<text transform="translate(68.6 525.3)" font-size="10" text-anchor="end" stroke="#fff" stroke-width="0.3">100</text>
<text transform="translate(68.89999999999999 519.8)" font-size="5.5" stroke="#fff" stroke-width="0.4">o</text>
<text transform="translate(64 544.3)" font-size="10" text-anchor="end" stroke="#fff" stroke-width="0.3">0</text>
<text transform="translate(64.3 538.8)" font-size="5.5" stroke="#fff" stroke-width="0.4">o</text>
<text transform="translate(75.6 564.9) scale(1.06 1)" font-size="12" text-anchor="middle" stroke="#fff" stroke-width="0.3">00:00</text>
<text transform="translate(211.6 564.9) scale(1.06 1)" font-size="12" text-anchor="middle" stroke="#fff" stroke-width="0.3">06:00</text>
<text transform="translate(347.6 564.9) scale(1.06 1)" font-size="12" text-anchor="middle" stroke="#fff" stroke-width="0.3">12:00</text>
<text transform="translate(483.6 564.9) scale(1.06 1)" font-size="12" text-anchor="middle" stroke="#fff" stroke-width="0.3">18:00</text>
<text transform="translate(75.6 596.2) scale(1.06 1)" font-size="12" text-anchor="middle" stroke="#fff" stroke-width="0.3">16.74</text>
<text transform="translate(211.6 596.2) scale(1.06 1)" font-size="12" text-anchor="middle" stroke="#fff" stroke-width="0.3">14.58</text>
<text transform="translate(347.6 596.2) scale(1.06 1)" font-size="12" text-anchor="middle" stroke="#fff" stroke-width="0.3">12.18</text>
<text transform="translate(483.6 596.2) scale(1.06 1)" font-size="12" text-anchor="middle" stroke="#fff" stroke-width="0.3">9.45</text>
<text transform="translate(75.6 611.8) scale(1.06 1)" font-size="12" text-anchor="middle" stroke="#fff" stroke-width="0.3">10.97</text>
<text transform="translate(211.6 611.8) scale(1.06 1)" font-size="12" text-anchor="middle" stroke="#fff" stroke-width="0.3">11.29</text>
<text transform="translate(347.6 611.8) scale(1.06 1)" font-size="12" text-anchor="middle" stroke="#fff" stroke-width="0.3">11.60</text>
<text transform="translate(483.6 611.8) scale(1.06 1)" font-size="12" text-anchor="middle" stroke="#fff" stroke-width="0.3">11.78</text>
<text transform="translate(75.6 627.5) scale(1.06 1)" font-size="12" text-anchor="middle" stroke="#fff" stroke-width="0.3">2031</text>
<text transform="translate(211.6 627.5) scale(1.06 1)" font-size="12" text-anchor="middle" stroke="#fff" stroke-width="0.3">2050</text>
<text transform="translate(347.6 627.5) scale(1.06 1)" font-size="12" text-anchor="middle" stroke="#fff" stroke-width="0.3">2117</text>
<text transform="translate(483.6 627.5) scale(1.06 1)" font-size="12" text-anchor="middle" stroke="#fff" stroke-width="0.3">2158</text>
<text transform="translate(75.6 643.1) scale(1.06 1)" font-size="12" text-anchor="middle" stroke="#fff" stroke-width="0.3">17.36</text>
<text transform="translate(211.6 643.1) scale(1.06 1)" font-size="12" text-anchor="middle" stroke="#fff" stroke-width="0.3">15.16</text>
<text transform="translate(347.6 643.1) scale(1.06 1)" font-size="12" text-anchor="middle" stroke="#fff" stroke-width="0.3">12.69</text>
<text transform="translate(483.6 643.1) scale(1.06 1)" font-size="12" text-anchor="middle" stroke="#fff" stroke-width="0.3">9.86</text>
<text transform="translate(75.6 674.4) scale(1.06 1)" font-size="12" text-anchor="middle" stroke="#fff" stroke-width="0.3">187.05</text>
<text transform="translate(211.6 674.4) scale(1.06 1)" font-size="12" text-anchor="middle" stroke="#fff" stroke-width="0.3">349.88</text>
<text transform="translate(347.6 674.4) scale(1.06 1)" font-size="12" text-anchor="middle" stroke="#fff" stroke-width="0.3">154.54</text>
<text transform="translate(483.6 674.4) scale(1.06 1)" font-size="12" text-anchor="middle" stroke="#fff" stroke-width="0.3">322.81</text>
<text transform="translate(8 573.6)" font-size="12" stroke="#fff" stroke-width="0.3">UTC</text>
<text transform="translate(8 604)" font-size="12" stroke="#fff" stroke-width="0.3">R</text>
<text transform="translate(17 613.6) scale(1.04 1)" font-size="12" stroke="#fff" stroke-width="0.3">satur</text>
<text transform="translate(8 620.4)" font-size="12" stroke="#fff" stroke-width="0.3">Lat</text>
<text transform="translate(8 635)" font-size="12" stroke="#fff" stroke-width="0.3">LT</text>
<text transform="translate(8 651)" font-size="12" stroke="#fff" stroke-width="0.3">L</text>
<text transform="translate(14.8 660.5) scale(1.06 1)" font-size="12" stroke="#fff" stroke-width="0.3">saturn</text>
<text transform="translate(319 686.7) scale(1.085 1)" font-size="10" stroke="#fff" stroke-width="0.3">Background Subtracted</text>
<text transform="translate(569 686.7) scale(1.06 1)" font-size="10" stroke="#fff" stroke-width="0.3">in Stare Mode</text>
</g>
</g>
</svg>
</body></html>
